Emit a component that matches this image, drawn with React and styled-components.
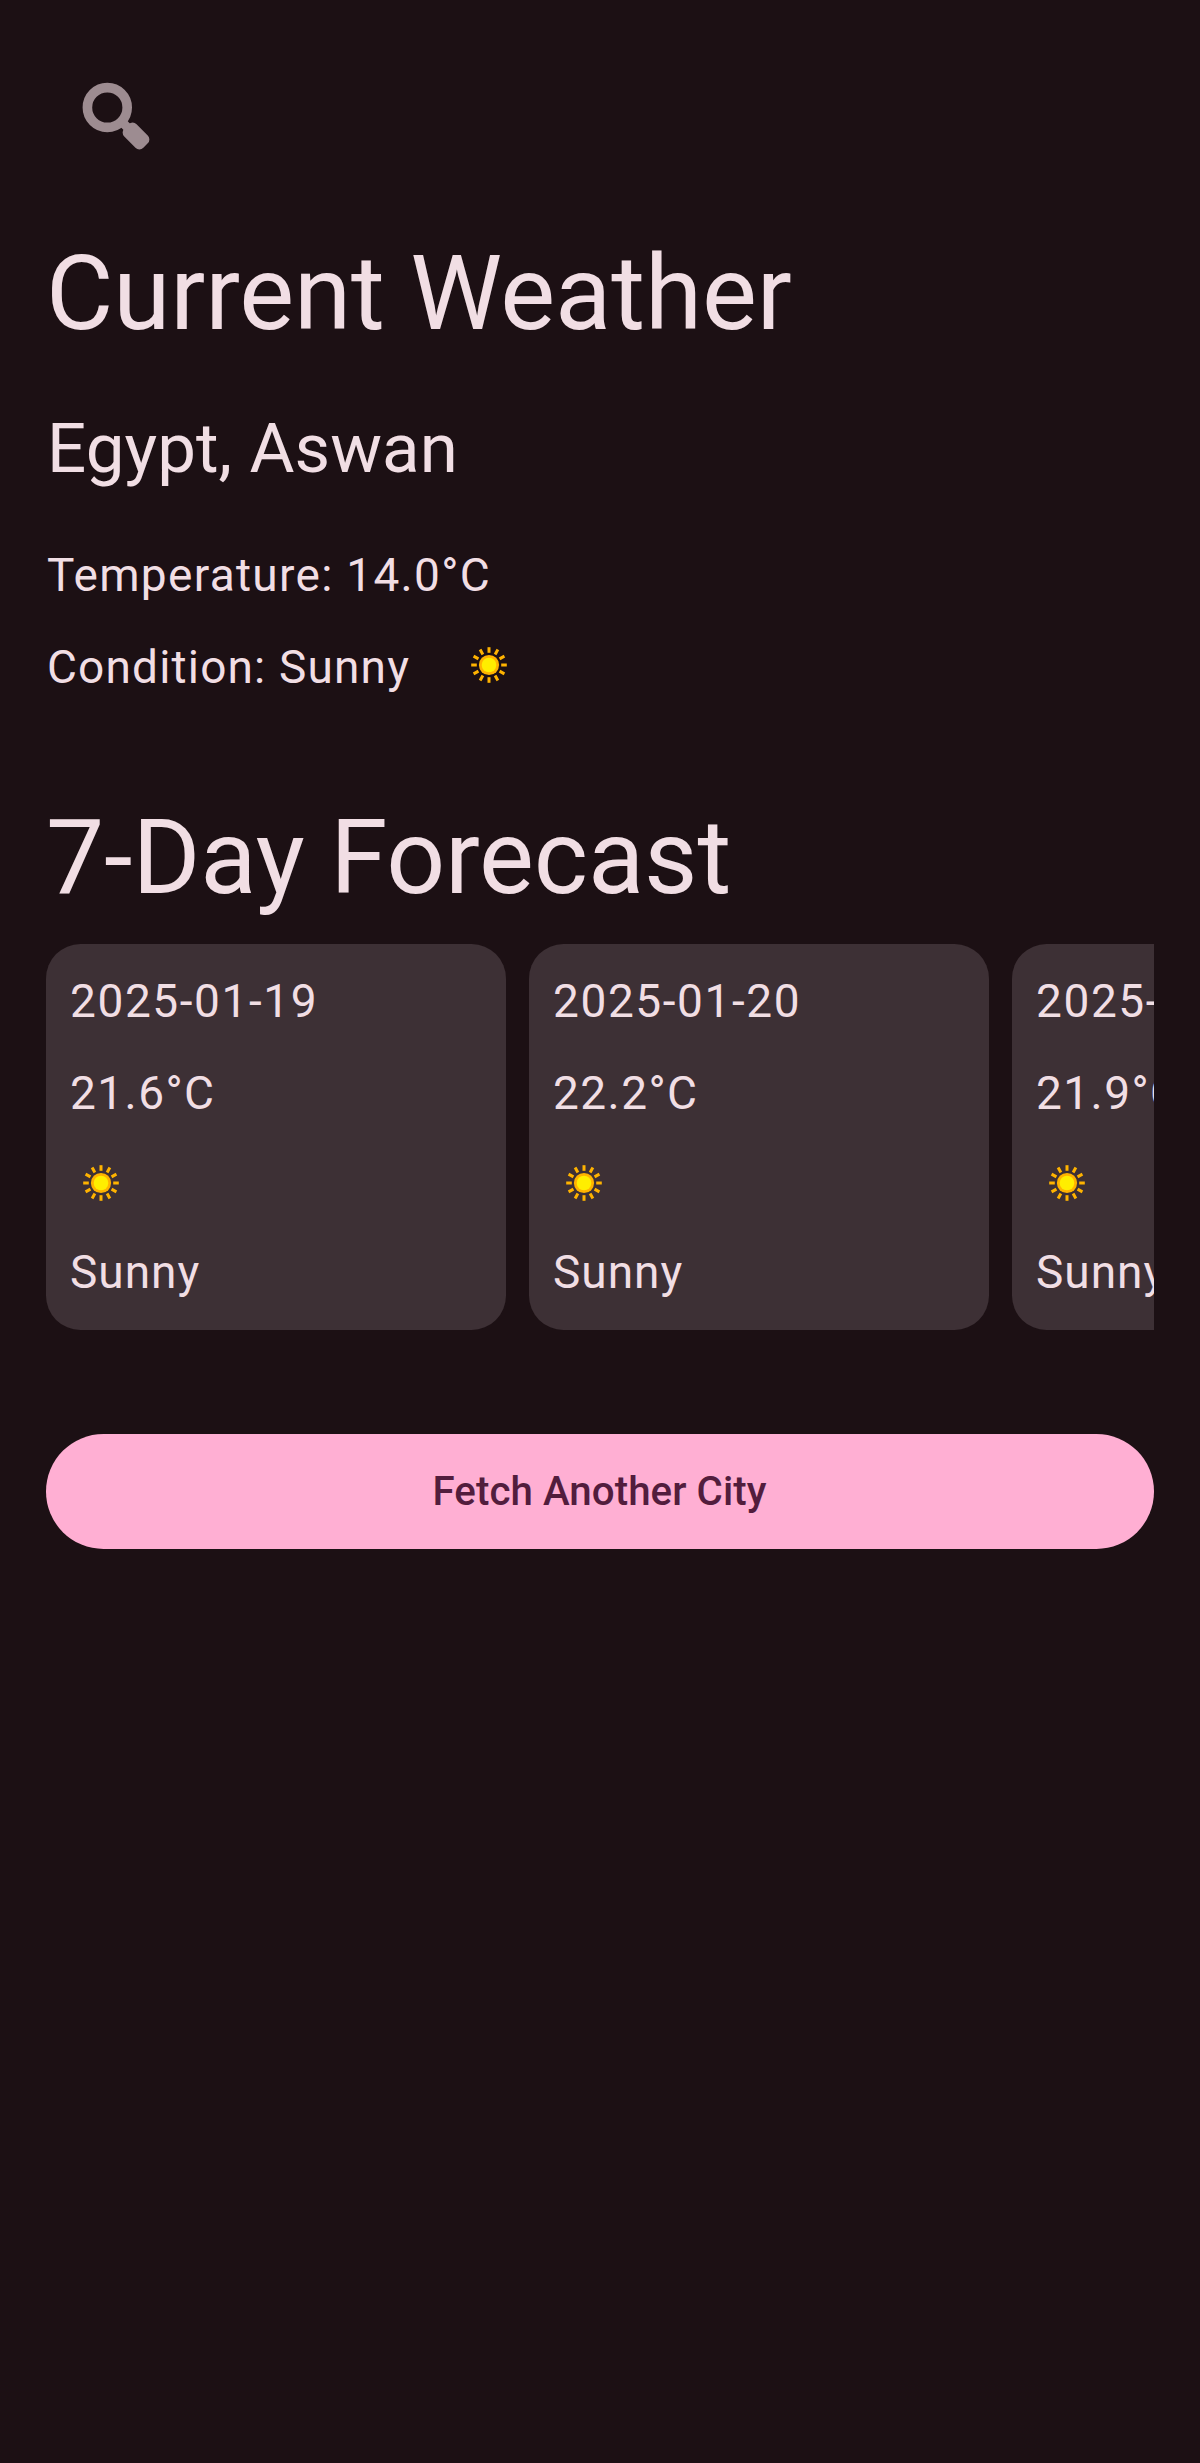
import React from "react";
import styled, { createGlobalStyle } from "styled-components";

const GlobalStyle = createGlobalStyle`
  *, *::before, *::after { box-sizing: border-box; }
  html, body { margin: 0; background: #1c1014; }
  body { font-family: Roboto, "Liberation Sans", sans-serif; color: #f1dee4; }
`;

const Screen = styled.main`
  display: flex;
  flex-direction: column;
  width: 100%;
  min-height: 100vh;
  padding: 46px;
  background: #1c1014;
`;

const SearchButton = styled.button`
  width: 138px;
  height: 138px;
  margin: 0 0 46px;
  padding: 0;
  border: 0;
  background: none;
  color: #9d8c91;
  svg { display: block; filter: blur(0.5px); }
`;

const Display = styled.h1`
  margin: 0;
  font-size: 103.5px;
  line-height: 127px;
  font-weight: 400;
  letter-spacing: -0.12px;
`;

const Location = styled.h2`
  margin: 46px 0;
  padding-left: 1px;
  font-size: 69px;
  line-height: 92px;
  font-weight: 400;
  letter-spacing: 0.06px;
`;

const Body = styled.p`
  margin: 0;
  padding-left: 1px;
  font-size: 46px;
  line-height: 69px;
  letter-spacing: ${({ $tracking = 1.4375 }) => $tracking}px;
  white-space: nowrap;
`;

const ConditionRow = styled.div`
  display: flex;
  align-items: flex-start;
  gap: 47px;
  height: 69px;
  margin: 23px 0 92px;
`;

const Icon = styled.svg`
  display: block;
  flex: none;
  width: 64px;
  height: 64px;
`;

const Forecast = styled.section`
  display: flex;
  gap: 23px;
  margin: 23px 0 104px;
  overflow: hidden;
`;

const DayCard = styled.article`
  display: flex;
  flex: 0 0 460px;
  flex-direction: column;
  gap: 23px;
  height: 386px;
  padding: 23px;
  border-radius: 34.5px;
  background: #3d3035;
`;

const FetchButton = styled.button`
  width: 100%;
  height: 115px;
  padding: 0 1px 0 0;
  border: 0;
  border-radius: 57.5px;
  background: #ffafd3;
  color: #521d3d;
  font-family: inherit;
  font-size: 40.25px;
  line-height: 57.5px;
  font-weight: 500;
  letter-spacing: 0.06px;
`;

const rays = Array.from({ length: 12 }, (_, i) => i * 30);

const Sun = () => (
  <Icon viewBox="0 0 64 64" role="img" aria-label="Sunny">
    {rays.map((angle) => (
      <rect key={angle} x="30.5" y="14.2" width="3" height="5.6" fill="#ffb300" transform={`rotate(${angle} 32 32)`} />
    ))}
    <circle cx="32" cy="32" r="10.1" fill="#ffb300" />
    <circle cx="32" cy="32" r="7.3" fill="#ffee00" />
  </Icon>
);

const SearchIcon = () => (
  <svg width="138" height="138" viewBox="0 0 138 138" fill="none">
    <circle cx="61.3" cy="61.5" r="19.9" stroke="currentColor" strokeWidth="9.6" />
    <path d="M74 74L84 84" stroke="currentColor" strokeWidth="9" />
    <rect x="-13.5" y="-8.7" width="27" height="17.4" rx="5.6" fill="currentColor" transform="translate(90 90) rotate(45)" />
  </svg>
);

const days = [
  { date: "2025-01-19", temperature: "21.6°C", condition: "Sunny" },
  { date: "2025-01-20", temperature: "22.2°C", condition: "Sunny" },
  { date: "2025-01-21", temperature: "21.9°C", condition: "Sunny" },
];

export default function App() {
  return (
    <>
      <GlobalStyle />
      <Screen>
        <SearchButton aria-label="Search">
          <SearchIcon />
        </SearchButton>
        <Display>Current Weather</Display>
        <Location>Egypt, Aswan</Location>
        <Body $tracking={1.3}>Temperature: 14.0°C</Body>
        <ConditionRow>
          <Body $tracking={1.17}>Condition: Sunny</Body>
          <Sun />
        </ConditionRow>
        <Display as="h2">7-Day Forecast</Display>
        <Forecast>
          {days.map((day) => (
            <DayCard key={day.date}>
              <Body $tracking={1.6}>{day.date}</Body>
              <Body>{day.temperature}</Body>
              <Sun />
              <Body $tracking={1}>{day.condition}</Body>
            </DayCard>
          ))}
        </Forecast>
        <FetchButton>Fetch Another City</FetchButton>
      </Screen>
    </>
  );
}
